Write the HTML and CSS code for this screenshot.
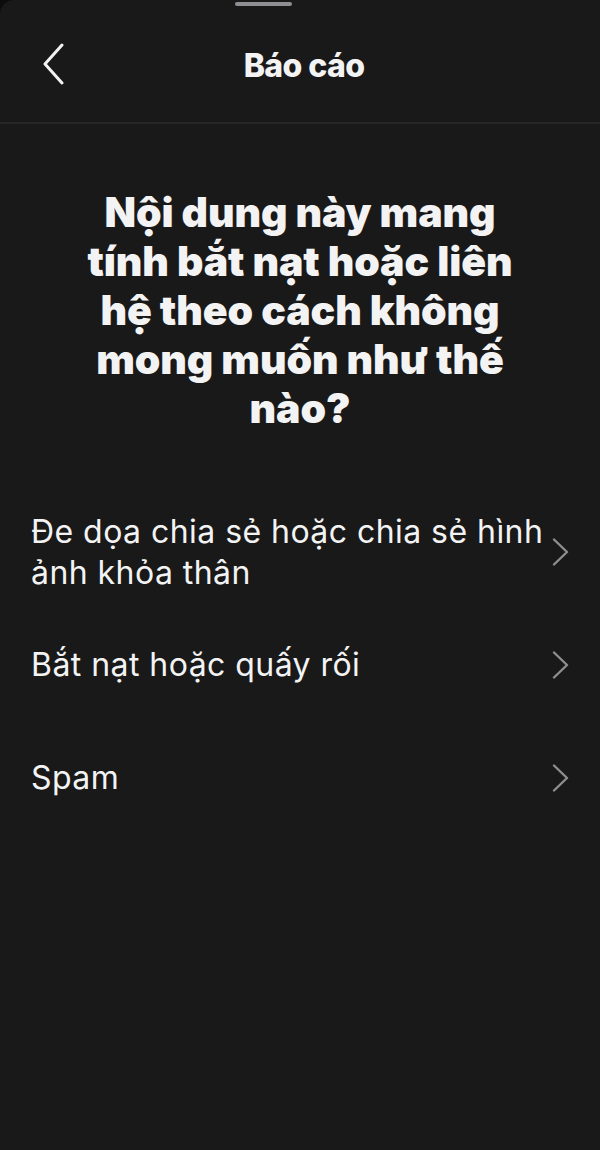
FILE: index.html
```html
<!DOCTYPE html>
<html lang="vi">
<head>
<meta charset="UTF-8" />
<meta name="viewport" content="width=device-width, initial-scale=1" />
<title>Báo cáo</title>
<link rel="stylesheet" href="styles.css">
</head>
<body>
<div class="sheet">
  <div class="grabber"></div>
  <header class="topbar">
    <button class="back" aria-label="Quay lại">
      <svg width="24" height="42" viewBox="0 0 24 42"><path d="M20 2 L3 21 L20 40" fill="none" stroke="#f2f2f2" stroke-width="3" stroke-linecap="round" stroke-linejoin="round"/></svg>
    </button>
    <h1>Báo cáo</h1>
  </header>

  <h2 class="question">Nội dung này mang tính bắt nạt hoặc liên hệ theo cách không mong muốn như thế nào?</h2>

  <ul class="options">
    <li class="option">
      <span>Đe dọa chia sẻ hoặc chia sẻ hình ảnh khỏa thân</span>
      <svg class="chev" width="18" height="28" viewBox="0 0 18 28"><path d="M2 1.5 L15 14 L2 26.5" fill="none" stroke="#8e8e8e" stroke-width="2.4" stroke-linecap="round" stroke-linejoin="round"/></svg>
    </li>
    <li class="option">
      <span>Bắt nạt hoặc quấy rối</span>
      <svg class="chev" width="18" height="28" viewBox="0 0 18 28"><path d="M2 1.5 L15 14 L2 26.5" fill="none" stroke="#8e8e8e" stroke-width="2.4" stroke-linecap="round" stroke-linejoin="round"/></svg>
    </li>
    <li class="option">
      <span>Spam</span>
      <svg class="chev" width="18" height="28" viewBox="0 0 18 28"><path d="M2 1.5 L15 14 L2 26.5" fill="none" stroke="#8e8e8e" stroke-width="2.4" stroke-linecap="round" stroke-linejoin="round"/></svg>
    </li>
  </ul>
</div>
</body>
</html>
```

FILE: styles.css
```css
html, body { margin: 0; padding: 0; background: #0c0c0c; }
body { font-family: "Inter", "Noto Sans", sans-serif; color: #f3f3f3; }
.sheet { background: #19191a; min-height: 1150px; border-top-left-radius: 14px; }
.grabber { width: 57px; height: 4px; background: #8e8e93; border-radius: 2px; margin-left: 235px; position: relative; top: 2px; }
.topbar { display: flex; align-items: center; justify-content: center; height: 118px; border-bottom: 2px solid #262627; position: relative; }
.topbar h1 { margin: 0 0 0 8px; font-size: 32px; font-weight: 800; letter-spacing: -0.6px; position: relative; top: 2px; }
.back { position: absolute; left: 42px; top: 39px; background: none; border: none; padding: 0; cursor: pointer; }
.question { max-width: 460px; margin: 64px auto 0; text-align: center; font-size: 41px; line-height: 49px; font-weight: 900; letter-spacing: -0.1px; }
.options { list-style: none; margin: 62px 0 0; padding: 0 30px 0 31px; }
.option { display: flex; align-items: center; justify-content: space-between; font-size: 32px; line-height: 41px; min-height: 113px; letter-spacing: 0.45px; }
.option span { max-width: 522px; }
.chev { flex-shrink: 0; }
```
